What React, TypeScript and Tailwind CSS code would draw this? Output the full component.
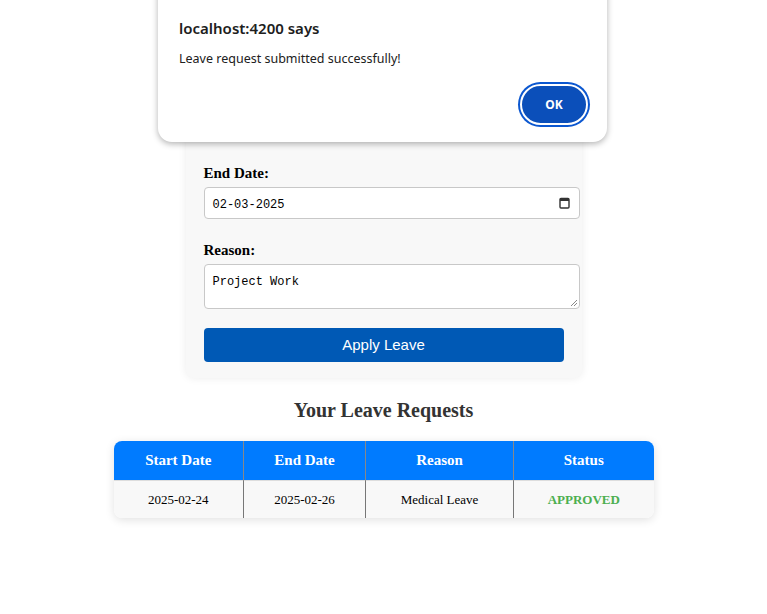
const requests = [
    { start: "2025-02-24", end: "2025-02-26", reason: "Medical Leave", status: "APPROVED" },
];

function AlertDialog() {
    return (
        <div className="absolute left-[158px] top-[-20px] w-[449px] h-[162px] bg-white rounded-[14px] shadow-[0_2px_6px_rgba(0,0,0,0.3)] px-[21px] pt-[38px] font-['Noto_Sans',sans-serif]">
            <div className="text-[15px] font-semibold text-[#202020] leading-5">localhost:4200 says</div>
            <div className="mt-[13px] text-[12.5px] text-[#202020] leading-4">Leave request submitted successfully!</div>
            <div className="flex justify-end mt-[17px]">
                <button className="w-[68px] h-[41px] rounded-full bg-[#0b4fba] text-white text-[12px] font-bold border-2 border-white ring-2 ring-[#0b57d0] mr-[-2px]">
                    OK
                </button>
            </div>
        </div>
    );
}

export default function App() {
    return (
        <div className="relative w-[767px] h-[614px] bg-white overflow-hidden font-['Liberation_Serif',serif]">
            <div className="flex flex-col items-center">
                {/* Leave form */}
                <div className="w-[396px] bg-[#f8f8f8] rounded-lg shadow-[0_0_8px_rgba(0,0,0,0.08)] px-[18px] pt-[165px] pb-[16px]">
                    <label className="block text-[15px] font-bold text-black leading-4">End Date:</label>
                    <div className="mt-[6px] w-[376px] h-[32px] bg-white border border-[#c8c8c8] rounded-[4px] flex items-center justify-between pl-[8px] pr-[9px] pt-[3px]">
                        <span className="font-['Liberation_Mono',monospace] text-[12px] text-black">02-03-2025</span>
                        <svg width="11" height="12" viewBox="0 0 11 12" className="mb-[3px]">
                            <rect x="1" y="1.5" width="9" height="9.5" rx="1" fill="none" stroke="#333" strokeWidth="1.4" />
                            <rect x="1" y="1.5" width="9" height="2.5" fill="#333" />
                        </svg>
                    </div>

                    <label className="block mt-[23px] text-[15px] font-bold text-black leading-4">Reason:</label>
                    <div className="relative mt-[6px] w-[376px] h-[45px] bg-white border border-[#c8c8c8] rounded-[4px] px-[8px] pt-[3px]">
                        <span className="font-['Liberation_Mono',monospace] text-[12px] text-black">Project Work</span>
                        <svg className="absolute right-[1px] bottom-[1px]" width="9" height="9" viewBox="0 0 9 9">
                            <path d="M8 2 L2 8 M8 5 L5 8" stroke="#888" strokeWidth="1" />
                        </svg>
                    </div>

                    <button className="mt-[19px] w-[360px] h-[34px] bg-[#0059b5] rounded-[4px] text-white text-[15px] font-['Liberation_Sans',sans-serif]">
                        Apply Leave
                    </button>
                </div>

                <h2 className="mt-[20px] text-[20px] font-bold text-[#333] leading-6">Your Leave Requests</h2>

                {/* Requests table */}
                <div className="mt-[19px] w-[540px] rounded-lg overflow-hidden shadow-[0_2px_10px_rgba(0,0,0,0.12)]">
                    <table className="w-full border-collapse text-center">
                        <thead>
                            <tr className="bg-[#007bff] text-white h-[39px]">
                                <th className="w-[130px] text-[15px] font-bold border-r border-[#888]">Start Date</th>
                                <th className="w-[122px] text-[15px] font-bold border-r border-[#888]">End Date</th>
                                <th className="w-[148px] text-[15px] font-bold border-r border-[#888]">Reason</th>
                                <th className="text-[15px] font-bold">Status</th>
                            </tr>
                        </thead>
                        <tbody>
                            {requests.map((r) => (
                                <tr key={r.start} className="bg-[#f8f8f8] h-[38px] text-[13px] text-black border-t border-[#ddd]">
                                    <td className="border-r border-[#777]">{r.start}</td>
                                    <td className="border-r border-[#777]">{r.end}</td>
                                    <td className="border-r border-[#777]">{r.reason}</td>
                                    <td className="font-bold text-[#4caf50]">{r.status}</td>
                                </tr>
                            ))}
                        </tbody>
                    </table>
                </div>
            </div>

            <AlertDialog />
        </div>
    );
}
